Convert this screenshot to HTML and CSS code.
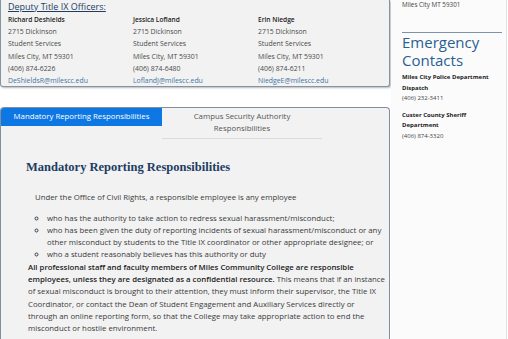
FILE: index.html
```
<!DOCTYPE html>
<html lang="en">
<head>
<meta charset="utf-8">
<title>Title IX</title>
<link rel="stylesheet" href="styles.css">
</head>
<body>
<div class="page">
  <main class="main">
    <section class="officers">
      <h3 class="officers-title">Deputy Title IX Officers:</h3>
      <div class="officer-grid">
        <div class="officer">
          <strong>Richard Deshields</strong>
          <span>2715 Dickinson</span>
          <span>Student Services</span>
          <span>Miles City, MT 59301</span>
          <span>(406) 874-6226</span>
          <a href="#">DeShieldsR@milescc.edu</a>
        </div>
        <div class="officer">
          <strong>Jessica Lofland</strong>
          <span>2715 Dickinson</span>
          <span>Student Services</span>
          <span>Miles City, MT 59301</span>
          <span>(406) 874-6480</span>
          <a href="#">LoflandJ@milescc.edu</a>
        </div>
        <div class="officer">
          <strong>Erin Niedge</strong>
          <span>2715 Dickinson</span>
          <span>Student Services</span>
          <span>Miles City, MT 59301</span>
          <span>(406) 874-6211</span>
          <a href="#">NiedgeE@milescc.edu</a>
        </div>
      </div>
    </section>

    <section class="tabs-box">
      <div class="tabs">
        <div class="tab tab-active">Mandatory Reporting Responsibilities</div>
        <div class="tab">Campus Security Authority<br>Responsibilities</div>
      </div>
      <div class="panel">
        <h2 class="panel-title">Mandatory Reporting Responsibilities</h2>
        <p class="intro">Under the Office of Civil Rights, a responsible employee is any employee</p>
        <ul class="duties">
          <li>who has the authority to take action to redress sexual harassment/misconduct;</li>
          <li>who has been given the duty of reporting incidents of sexual harassment/misconduct or any other misconduct by students to the Title IX coordinator or other appropriate designee; or</li>
          <li>who a student reasonably believes has this authority or duty</li>
        </ul>
        <p class="body-text"><strong>All professional staff and faculty members of Miles Community College are responsible employees, unless they are designated as a confidential resource.</strong> This means that if an instance of sexual misconduct is brought to their attention, they must inform their supervisor, the Title IX Coordinator, or contact the Dean of Student Engagement and Auxiliary Services directly or through an online reporting form, so that the College may take appropriate action to end the misconduct or hostile environment.</p>
      </div>
    </section>
  </main>

  <aside class="sidebar">
    <p class="side-addr">Miles City MT 59301</p>
    <hr class="side-rule">
    <h2 class="side-title">Emergency Contacts</h2>
    <div class="contact">
      <strong>Miles City Police Department Dispatch</strong>
      <span>(406) 232-3411</span>
    </div>
    <div class="contact">
      <strong>Custer County Sheriff Department</strong>
      <span>(406) 874-3320</span>
    </div>
  </aside>
</div>
</body>
</html>
```
FILE: styles.css
```
* { box-sizing: border-box; }
html, body { margin: 0; padding: 0; background: #ffffff; }
body {
  font-family: "Open Sans", "DejaVu Sans", sans-serif;
  color: #3a3a3a;
  width: 508px;
  height: 339px;
  overflow: hidden;
}
.page {
  display: grid;
  grid-template-columns: 391px 117px;
  height: 339px;
}
.main {
  display: flex;
  flex-direction: column;
  min-width: 0;
}

/* officers box */
.officers {
  width: 390px;
  height: 87px;
  background: #f2f2f2;
  border: 1px solid #8594a3;
  border-top: none;
  border-radius: 0 0 3px 3px;
  box-shadow: 1px 1px 2px rgba(0,0,0,0.28);
  padding: 0 0 0 7px;
}
.officers-title {
  margin: 0;
  font-size: 9px;
  line-height: 14px;
  font-weight: normal;
  color: #1d3d63;
  text-decoration: underline;
  text-underline-offset: 1px;
}
.officer-grid {
  display: grid;
  grid-template-columns: 125px 125px 125px;
}
.officer {
  display: flex;
  flex-direction: column;
  font-size: 6.9px;
  line-height: 12.2px;
  color: #4a4a4a;
}
.officer strong { font-weight: 600; font-size: 6.6px; color: #222; }
.officer a { color: #4474a2; text-decoration: none; }

/* tabs */
.tabs-box {
  margin-top: 20px;
  width: 390px;
  flex: 1;
  background: #f2f2f2;
  border: 1px solid #7f8fa0;
  border-bottom: none;
  border-radius: 4px 4px 0 0;
}
.tabs {
  display: flex;
  align-items: flex-start;
}
.tab {
  width: 160px;
  padding: 2px 4px 4px;
  font-size: 7.8px;
  line-height: 12px;
  text-align: center;
  color: #555;
  border-bottom: 1px solid #dcdcdc;
}
.tab-active {
  width: 161px;
  background: #0d77e4;
  color: #ffffff;
  border-bottom: none;
  border-radius: 3px 0 0 0;
}
.panel {
  padding: 0 4px 0 25px;
}
.panel-title {
  margin: 20px 0 0;
  font-family: "Liberation Serif", "DejaVu Serif", serif;
  font-weight: 700;
  font-size: 12.5px;
  line-height: 16px;
  color: #1d3d63;
}
.intro {
  margin: 16px 0 0 9px;
  font-size: 7.8px;
  line-height: 12px;
}
.duties {
  margin: 9px 0 0;
  padding: 0 0 0 21px;
  list-style: circle;
  font-size: 7.8px;
  line-height: 12px;
}
.body-text {
  margin: 1px 0 0 2px;
  font-size: 7.8px;
  line-height: 12.2px;
}
.body-text strong { color: #222; font-weight: 600; }

/* sidebar */
.sidebar {
  background: #fbfbfb;
  border-right: 1px solid #e2e2e2;
  margin-right: 1px;
  padding: 0 4px 0 11px;
}
.side-addr {
  margin: 0;
  font-size: 6.3px;
  line-height: 9px;
  color: #444;
}
.side-rule {
  margin: 23px 0 0;
  border: none;
  border-top: 1px solid #7c93ac;
  height: 0;
}
.side-title {
  margin: 0;
  font-weight: normal;
  font-size: 15px;
  line-height: 18px;
  color: #2a5f93;
}
.contact {
  display: flex;
  flex-direction: column;
  font-size: 6px;
  line-height: 10.5px;
  color: #444;
  margin-top: 3px;
  margin-bottom: 6px;
}
.contact strong { color: #222; }
```
